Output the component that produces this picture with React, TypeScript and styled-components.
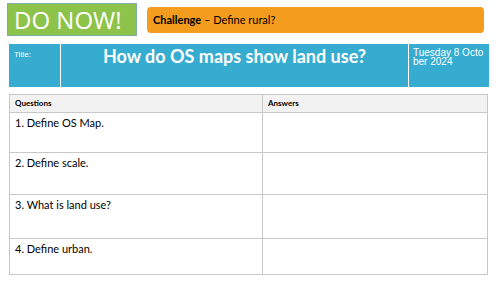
import React, { FC } from 'react';
import styled, { createGlobalStyle } from 'styled-components';

const GlobalStyle = createGlobalStyle`
  html, body {
    margin: 0;
    padding: 0;
    background: #fff;
  }
  * {
    box-sizing: border-box;
  }
`;

const questions = [
  { text: '1. Define OS Map.', height: 40 },
  { text: '2. Define scale.', height: 42 },
  { text: '3. What is land use?', height: 44 },
  { text: '4. Define urban.', height: 35 },
];

const App: FC = () => {
  return (
    <Page>
      <GlobalStyle />
      {/* top */}
      <TopRow>
        <DoNow>DO NOW!</DoNow>
        <Challenge>
          <strong>Challenge</strong> – Define rural?
        </Challenge>
      </TopRow>
      {/* title bar */}
      <TitleBar>
        <TitleLabel>Title:</TitleLabel>
        <MainTitle>How do OS maps show land use?</MainTitle>
        <DateCell>Tuesday 8 October 2024</DateCell>
      </TitleBar>
      {/* table */}
      <Table>
        <HeaderRow>
          <HeaderCell>Questions</HeaderCell>
          <HeaderCell>Answers</HeaderCell>
        </HeaderRow>
        {questions.map((q) => (
          <Row key={q.text} $height={q.height}>
            <Cell>{q.text}</Cell>
            <Cell />
          </Row>
        ))}
      </Table>
    </Page>
  );
};

const Page = styled.div`
  width: 500px;
  height: 282px;
  overflow: hidden;
  padding: 3px 0 0 7px;
  font-family: Lato, 'Liberation Sans', sans-serif;
`;

const TopRow = styled.div`
  display: flex;
  align-items: flex-start;
  gap: 10px;
`;

const DoNow = styled.div`
  width: 130px;
  height: 33px;
  background: #8dc34a;
  border: 1px solid #7fb0a8;
  color: #fff;
  font-family: 'Open Sans', sans-serif;
  font-size: 24px;
  line-height: 31px;
  padding-left: 6px;
`;

const Challenge = styled.div`
  width: 337px;
  height: 26px;
  margin-top: 4px;
  background: #f39c1e;
  border-radius: 4px;
  color: #000;
  font-size: 11px;
  line-height: 26px;
  padding-left: 6px;

  strong {
    font-weight: 700;
  }
`;

const TitleBar = styled.div`
  display: grid;
  grid-template-columns: 51px 347px 80px;
  gap: 1px;
  width: 480px;
  height: 43px;
  margin: 8px 0 0 2px;
  background: #fff;

  & > * {
    background: #36acd0;
    color: #fff;
  }
`;

const TitleLabel = styled.div`
  font-family: 'Liberation Sans', Arial, sans-serif;
  font-size: 8px;
  padding: 6px 0 0 5px;
`;

const MainTitle = styled.div`
  font-weight: 700;
  font-size: 18px;
  text-align: center;
  padding-top: 1px;
`;

const DateCell = styled.div`
  font-family: 'Liberation Sans', Arial, sans-serif;
  font-size: 10px;
  line-height: 8.5px;
  word-break: break-all;
  padding: 5px 4px 0 4px;
`;

const Table = styled.div`
  width: 479px;
  margin: 7px 0 0 2px;
  border: 1px solid #c8c8c8;
`;

const HeaderRow = styled.div`
  display: grid;
  grid-template-columns: 253px 1fr;
  height: 18px;
  background: #f2f2f2;
  border-bottom: 1px solid #c8c8c8;
`;

const HeaderCell = styled.div`
  font-size: 8px;
  font-weight: 700;
  line-height: 17px;
  padding-left: 5px;
  color: #000;

  &:first-child {
    border-right: 1px solid #c8c8c8;
  }
`;

const Row = styled.div<{ $height: number }>`
  display: grid;
  grid-template-columns: 253px 1fr;
  height: ${(p) => p.$height}px;
  border-bottom: 1px solid #c8c8c8;

  &:last-child {
    border-bottom: none;
  }
`;

const Cell = styled.div`
  font-size: 11px;
  color: #000;
  padding: 3px 0 0 5px;

  &:first-child {
    border-right: 1px solid #c8c8c8;
  }
`;

export default App;
